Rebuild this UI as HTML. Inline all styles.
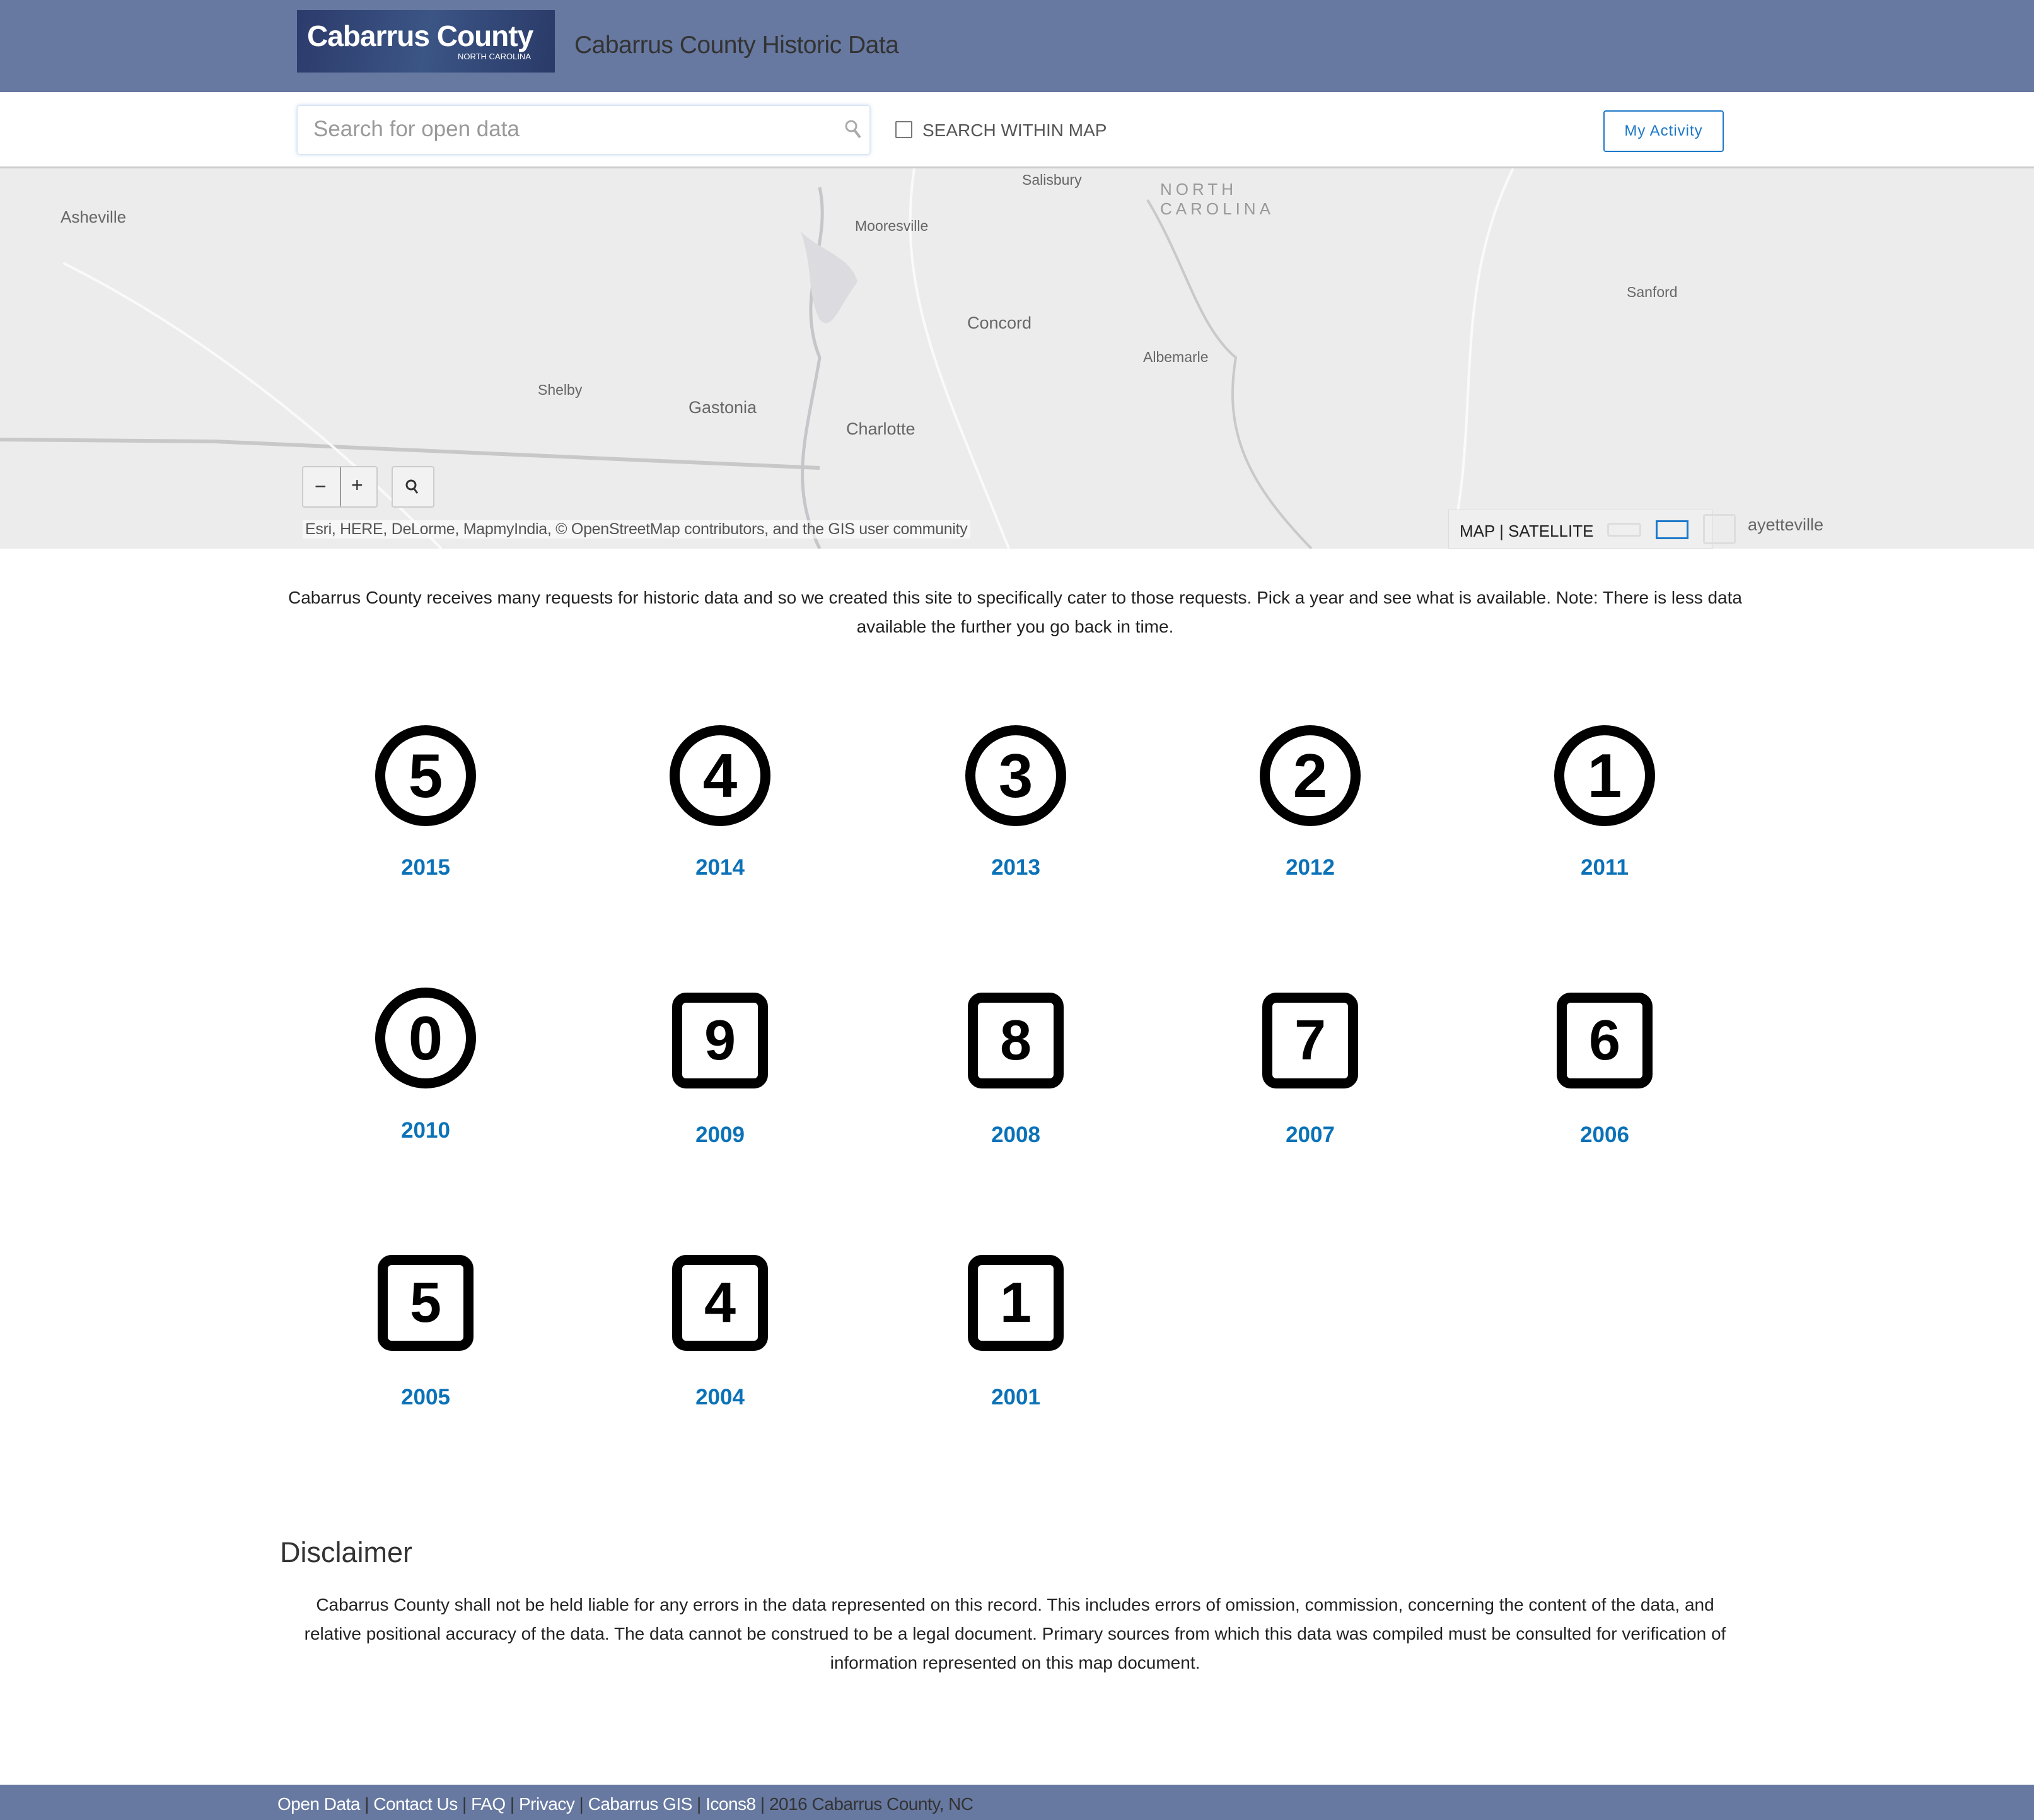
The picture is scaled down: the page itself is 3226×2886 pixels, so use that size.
<!DOCTYPE html>
<html><head><meta charset="utf-8"><style>
*{box-sizing:border-box;margin:0;padding:0}
body{width:3226px;height:2886px;position:relative;background:#fff;font-family:"Liberation Sans",Arial,sans-serif;overflow:hidden}
.abs{position:absolute}
#hdr{left:0;top:0;width:3226px;height:146px;background:#6779a1}
#logo{left:471px;top:16px;width:409px;height:99px;background:linear-gradient(100deg,#2c3b6b,#3b5585 50%,#2a3a68);color:#fff}
#bar{left:0;top:146px;width:3226px;height:121px;background:#fff;border-bottom:3px solid #ccc;box-shadow:0 2px 4px rgba(0,0,0,.15)}
#map{left:0;top:267px;width:3226px;height:603px;background:#ececec;overflow:hidden}
.lbl{position:absolute;color:#666;font-size:23px}
.ic{position:absolute;width:160px;height:160px;display:flex;align-items:center;justify-content:center;font-weight:bold;font-size:98px;color:#000;border:16px solid #000}
.c{border-radius:50%}
.s{border-radius:22px;width:152px;height:152px;font-size:90px}
.yr{position:absolute;width:300px;text-align:center;color:#0b72b8;font-weight:bold;font-size:35px}
.p{position:absolute;width:2300px;text-align:center;font-size:28px;line-height:46px;color:#222}
#ft{left:0;top:2830px;width:3226px;height:56px;background:#6779a1;font-size:28px;letter-spacing:-0.5px;color:#333;padding:15px 0 0 440px}
#ft a{color:#fff;text-decoration:none}
#ft span{color:#333}
</style></head><body>
<div id="hdr" class="abs"></div>
<div id="logo" class="abs"><div style="position:absolute;left:16px;top:14px;font-size:46px;font-weight:bold;letter-spacing:-1px">Cabarrus County</div><div style="position:absolute;right:38px;top:66px;font-size:13px">NORTH CAROLINA</div></div>
<div class="abs" style="left:911px;top:50px;font-size:39px;color:#333;letter-spacing:-0.5px">Cabarrus County Historic Data</div>
<div id="bar" class="abs"></div>
<div class="abs" style="left:471px;top:167px;width:909px;height:78px;border:1px solid #d8e4f0;border-radius:4px;box-shadow:0 0 6px rgba(120,170,220,.5);background:#fff"></div>
<div class="abs" style="left:497px;top:185px;font-size:35px;color:#999">Search for open data</div>
<svg class="abs" style="left:1338px;top:188px" width="30" height="34" viewBox="0 0 30 34"><circle cx="12" cy="12" r="8" fill="none" stroke="#aaa" stroke-width="3"/><path d="M17 18 L26 30" stroke="#aaa" stroke-width="4"/></svg>
<div class="abs" style="left:1420px;top:192px;width:27px;height:27px;border:2px solid #777;border-radius:2px"></div>
<div class="abs" style="left:1463px;top:191px;font-size:28px;color:#555">SEARCH WITHIN MAP</div>
<div class="abs" style="left:2543px;top:175px;width:191px;height:66px;border:2px solid #1b78c8;border-radius:4px;color:#1b78c8;font-size:24px;text-align:center;line-height:62px;letter-spacing:1px">My Activity</div>
<div id="map" class="abs">
<svg width="3226" height="603" style="position:absolute;left:0;top:0">
<path d="M0 430 L340 433 L1300 475" stroke="#c8c8c8" stroke-width="6" fill="none"/>
<path d="M1300 30 C1320 120 1260 200 1300 300 C1280 420 1250 500 1300 603" stroke="#c6c6ca" stroke-width="5" fill="none"/>
<path d="M1820 50 C1880 150 1900 250 1960 300 C1940 420 1980 500 2080 603" stroke="#c9c9cc" stroke-width="4" fill="none"/>
<path d="M100 150 C300 250 500 400 700 603 M1450 0 C1420 200 1500 350 1600 603 M2400 0 C2300 200 2350 400 2300 603" stroke="#fafafa" stroke-width="4" fill="none"/>
<path d="M1270 100 C1300 130 1350 140 1360 180 C1330 220 1320 260 1300 240 C1280 200 1290 160 1270 100 Z" fill="#dcdce0"/>
</svg>
<div class="lbl" style="left:96px;top:62px;font-size:26px">Asheville</div>
<div class="lbl" style="left:1621px;top:5px">Salisbury</div>
<div class="lbl" style="left:1840px;top:18px;font-size:26px;letter-spacing:6px;color:#999">NORTH<br>CAROLINA</div>
<div class="lbl" style="left:1356px;top:78px">Mooresville</div>
<div class="lbl" style="left:1534px;top:230px;font-size:27px">Concord</div>
<div class="lbl" style="left:2580px;top:183px">Sanford</div>
<div class="lbl" style="left:1813px;top:286px">Albemarle</div>
<div class="lbl" style="left:853px;top:338px">Shelby</div>
<div class="lbl" style="left:1092px;top:364px;font-size:27px">Gastonia</div>
<div class="lbl" style="left:1342px;top:398px;font-size:27px">Charlotte</div>
<div class="abs" style="left:479px;top:472px;width:120px;height:66px;border:2px solid #ccc;border-radius:4px;background:#f2f2f2;font-size:32px;color:#333"><span style="position:absolute;left:18px;top:12px">−</span><div style="position:absolute;left:58px;top:0;width:2px;height:62px;background:#999"></div><span style="position:absolute;left:76px;top:10px">+</span></div>
<div class="abs" style="left:621px;top:472px;width:68px;height:66px;border:2px solid #ccc;border-radius:4px;background:#f2f2f2"><svg width="64" height="62"><circle cx="29" cy="28" r="7" fill="none" stroke="#333" stroke-width="3"/><path d="M33 33 L39 41" stroke="#333" stroke-width="3"/></svg></div>
<div class="abs" style="left:480px;top:558px;padding:0 4px;background:rgba(255,255,255,.6);font-size:25px;color:#555;letter-spacing:-0.3px">Esri, HERE, DeLorme, MapmyIndia, © OpenStreetMap contributors, and the GIS user community</div>
<div class="abs" style="left:2297px;top:541px;width:420px;height:62px;background:#efefef;border:1px solid #ddd"></div>
<div class="abs" style="left:2315px;top:560px;font-size:26px;color:#222">MAP | SATELLITE</div>
<div class="abs" style="left:2549px;top:562px;width:54px;height:22px;border:3px solid #ddd;border-radius:4px"></div>
<div class="abs" style="left:2626px;top:558px;width:52px;height:30px;border:3px solid #1b78c8"></div>
<div class="abs" style="left:2701px;top:548px;width:52px;height:48px;border:3px solid #ddd;border-radius:4px"></div>
<div class="lbl" style="left:2772px;top:550px;font-size:27px">ayetteville</div>
</div>
<div class="p" style="left:420px;width:2380px;top:925px">Cabarrus County receives many requests for historic data and so we created this site to specifically cater to those requests. Pick a year and see what is available. Note: There is less data available the further you go back in time.</div>

<div class="ic c" style="left:595px;top:1150px">5</div><div class="yr" style="left:525px;top:1356px">2015</div>
<div class="ic c" style="left:1062px;top:1150px">4</div><div class="yr" style="left:992px;top:1356px">2014</div>
<div class="ic c" style="left:1531px;top:1150px">3</div><div class="yr" style="left:1461px;top:1356px">2013</div>
<div class="ic c" style="left:1998px;top:1150px">2</div><div class="yr" style="left:1928px;top:1356px">2012</div>
<div class="ic c" style="left:2465px;top:1150px">1</div><div class="yr" style="left:2395px;top:1356px">2011</div>

<div class="ic c" style="left:595px;top:1566px">0</div><div class="yr" style="left:525px;top:1773px">2010</div>
<div class="ic s" style="left:1066px;top:1574px">9</div><div class="yr" style="left:992px;top:1780px">2009</div>
<div class="ic s" style="left:1535px;top:1574px">8</div><div class="yr" style="left:1461px;top:1780px">2008</div>
<div class="ic s" style="left:2002px;top:1574px">7</div><div class="yr" style="left:1928px;top:1780px">2007</div>
<div class="ic s" style="left:2469px;top:1574px">6</div><div class="yr" style="left:2395px;top:1780px">2006</div>

<div class="ic s" style="left:599px;top:1990px">5</div><div class="yr" style="left:525px;top:2196px">2005</div>
<div class="ic s" style="left:1066px;top:1990px">4</div><div class="yr" style="left:992px;top:2196px">2004</div>
<div class="ic s" style="left:1535px;top:1990px">1</div><div class="yr" style="left:1461px;top:2196px">2001</div>

<div class="abs" style="left:444px;top:2436px;font-size:45px;color:#333">Disclaimer</div>
<div class="p" style="left:460px;top:2522px">Cabarrus County shall not be held liable for any errors in the data represented on this record. This includes errors of omission, commission, concerning the content of the data, and relative positional accuracy of the data. The data cannot be construed to be a legal document. Primary sources from which this data was compiled must be consulted for verification of information represented on this map document.</div>
<div id="ft" class="abs"><a>Open Data</a> | <a>Contact Us</a> | <a>FAQ</a> | <a>Privacy</a> | <a>Cabarrus GIS</a> | <a>Icons8</a> | <span>2016 Cabarrus County, NC</span></div>
</body></html>
